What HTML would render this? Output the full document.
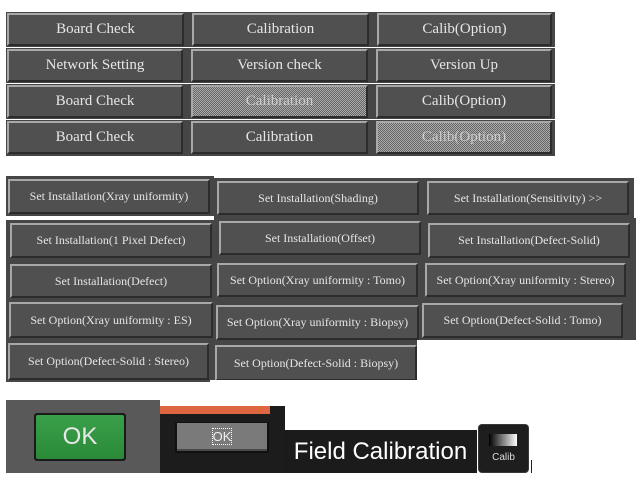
<!DOCTYPE html>
<html><head><style>
body{margin:0;width:641px;height:483px;background:#fff;position:relative;overflow:hidden;font-family:"Liberation Serif",serif}
.s{position:absolute;background:#464646}
.b{position:absolute;box-sizing:border-box;background:#505050;border:2px solid;border-color:#a8a8a8 #2c2c2c #2c2c2c #a8a8a8;color:#e6e6e6;display:flex;align-items:center;justify-content:center;white-space:nowrap}
.t{font-size:15px}
.m{font-size:12px}
.h{background-color:#888;background-image:repeating-conic-gradient(#666 0 25%,#aaa 0 50%);background-size:2px 2px;color:#ccc}
</style></head><body>
<div class="s" style="left:6px;top:12px;width:549px;height:35px"></div>
<div class="s" style="left:6px;top:48px;width:549px;height:35px"></div>
<div class="s" style="left:6px;top:84px;width:549px;height:35px"></div>
<div class="s" style="left:6px;top:120px;width:549px;height:36px"></div>
<div class="b t" style="left:7px;top:13px;width:177px;height:33px">Board Check</div>
<div class="b t" style="left:192px;top:13px;width:177px;height:33px">Calibration</div>
<div class="b t" style="left:377px;top:13px;width:175px;height:33px">Calib(Option)</div>
<div class="b t" style="left:7px;top:49px;width:176px;height:33px">Network Setting</div>
<div class="b t" style="left:191px;top:49px;width:177px;height:33px">Version check</div>
<div class="b t" style="left:376px;top:49px;width:176px;height:33px">Version Up</div>
<div class="b t" style="left:7px;top:85px;width:176px;height:33px">Board Check</div>
<div class="b t h" style="left:191px;top:85px;width:177px;height:33px">Calibration</div>
<div class="b t" style="left:376px;top:85px;width:176px;height:33px">Calib(Option)</div>
<div class="b t" style="left:7px;top:121px;width:176px;height:33px">Board Check</div>
<div class="b t" style="left:191px;top:121px;width:177px;height:33px">Calibration</div>
<div class="b t h" style="left:376px;top:121px;width:176px;height:33px">Calib(Option)</div>

<div class="s" style="left:6px;top:176px;width:208px;height:40px"></div>
<div class="s" style="left:6px;top:218px;width:630px;height:164px"></div>
<div class="s" style="left:214px;top:178px;width:420px;height:40px"></div>
<div style="position:absolute;left:6px;top:218px;width:208px;height:2px;background:#fff"></div>
<div class="b m" style="left:8px;top:179px;width:202px;height:35px">Set Installation(Xray uniformity)</div>
<div class="b m" style="left:217px;top:181px;width:202px;height:34px">Set Installation(Shading)</div>
<div class="b m" style="left:427px;top:181px;width:202px;height:34px">Set Installation(Sensitivity) &gt;&gt;</div>
<div class="b m" style="left:10px;top:223px;width:202px;height:35px">Set Installation(1 Pixel Defect)</div>
<div class="b m" style="left:219px;top:221px;width:202px;height:34px">Set Installation(Offset)</div>
<div class="b m" style="left:428px;top:223px;width:202px;height:35px">Set Installation(Defect-Solid)</div>
<div class="b m" style="left:10px;top:264px;width:202px;height:34px">Set Installation(Defect)</div>
<div class="b m" style="left:217px;top:263px;width:201px;height:34px">Set Option(Xray uniformity : Tomo)</div>
<div class="b m" style="left:425px;top:263px;width:201px;height:34px">Set Option(Xray uniformity : Stereo)</div>
<div class="b m" style="left:9px;top:302px;width:204px;height:36px">Set Option(Xray uniformity : ES)</div>
<div class="b m" style="left:216px;top:305px;width:203px;height:35px">Set Option(Xray uniformity : Biopsy)</div>
<div class="b m" style="left:422px;top:303px;width:201px;height:35px">Set Option(Defect-Solid : Tomo)</div>
<div class="b m" style="left:8px;top:343px;width:201px;height:37px">Set Option(Defect-Solid : Stereo)</div>
<div class="b m" style="left:215px;top:345px;width:202px;height:36px">Set Option(Defect-Solid : Biopsy)</div>
<div style="position:absolute;left:417px;top:340px;width:224px;height:50px;background:#fff"></div>
<div style="position:absolute;left:210px;top:380px;width:210px;height:10px;background:#fff"></div>

<div style="position:absolute;left:6px;top:400px;width:154px;height:73px;background:#595959"></div>
<div style="position:absolute;left:34px;top:413px;width:92px;height:48px;background:#1a1a1a;border-radius:3px"></div>
<div style="position:absolute;left:36px;top:415px;width:88px;height:44px;background:linear-gradient(#3aa04a,#2a8a38);border-radius:2px;color:#e8e8e8;font:24px 'Liberation Sans',sans-serif;display:flex;align-items:center;justify-content:center">OK</div>
<div style="position:absolute;left:160px;top:406px;width:125px;height:67px;background:#1c1c1c"></div>
<div style="position:absolute;left:160px;top:406px;width:110px;height:8px;background:#de6640"></div>
<div style="position:absolute;left:175px;top:422px;width:94px;height:31px;background:#111"></div>
<div style="position:absolute;left:177px;top:423px;width:90px;height:28px;background:#7a7a7a;border-bottom:2px solid #4a4a4a;box-sizing:border-box;color:#eee;font:13px 'Liberation Sans',sans-serif;display:flex;align-items:center;justify-content:center"><span style="outline:1px dotted #fff">OK</span></div>
<div style="position:absolute;left:284px;top:430px;width:193px;height:43px;background:#1b1b1b;color:#fff;font:24px 'Liberation Sans',sans-serif;display:flex;align-items:center;justify-content:center">Field Calibration</div>
<div style="position:absolute;left:478px;top:424px;width:51px;height:49px;background:#1e1e1e;border:1px solid #3a3a3a;box-sizing:border-box;border-radius:4px"></div>
<div style="position:absolute;left:489px;top:434px;width:28px;height:12px;background:linear-gradient(90deg,#000,#fff)"></div>
<div style="position:absolute;left:478px;top:452px;width:51px;color:#ddd;font:10px 'Liberation Sans',sans-serif;text-align:center">Calib</div>
<div style="position:absolute;left:531px;top:460px;width:1px;height:13px;background:#222"></div>
</body></html>
